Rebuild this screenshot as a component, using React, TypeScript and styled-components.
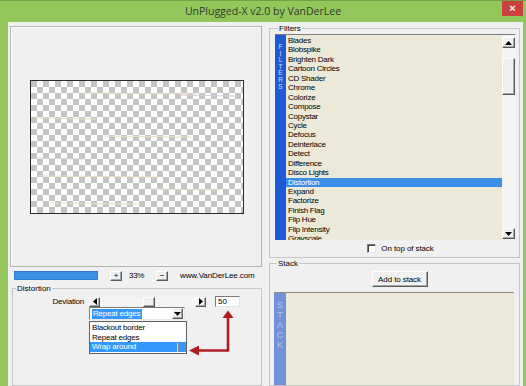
import React from "react";
import styled, { createGlobalStyle, css } from "styled-components";

const GlobalStyle = createGlobalStyle`
  html, body { margin: 0; padding: 0; background: #fff; }
  body {
    font-family: "Liberation Sans", Arial, sans-serif;
    font-size: 8px;
    color: #000;
  }
  * { box-sizing: border-box; }
`;

const raised = css`
  background: #f0f0f0;
  border: 1px solid;
  border-color: #fff #5a5a5a #5a5a5a #fff;
  box-shadow: inset -1px -1px 0 #a8a8a8;
`;

const sunken = css`
  background: #fff;
  border: 1px solid;
  border-color: #7a7a7a #e6e6e6 #e6e6e6 #7a7a7a;
`;

const filters = [
    "Blades", "Blobspike", "Brighten Dark", "Cartoon Circles", "CD Shader", "Chrome",
    "Colorize", "Compose", "Copystar", "Cycle", "Defocus", "Deinterlace", "Detect",
    "Difference", "Disco Lights", "Distortion", "Expand", "Factorize", "Finish Flag",
    "Flip Hue", "Flip Intensity", "Grayscale",
];

const streaks = [
    { x: 55, y: 12, w: 110, c: "#e6dcc0" },
    { x: 150, y: 14, w: 55, c: "#d9cde3" },
    { x: 5, y: 37, w: 60, c: "#e8dfc4" },
    { x: 70, y: 55, w: 90, c: "#ebe2c8" },
    { x: 3, y: 77, w: 50, c: "#ddd2e4" },
    { x: 8, y: 95, w: 120, c: "#e8dec2" },
    { x: 120, y: 108, w: 70, c: "#e4dbc6" },
    { x: 20, y: 122, w: 90, c: "#e9e0c8" },
];

const Frame = styled.div`
  position: relative;
  width: 526px;
  height: 386px;
  overflow: hidden;
  background: #93c75c;
  border-top: 1px solid #739f45;
  display: flex;
  flex-direction: column;
`;

const TitleBar = styled.div`
  height: 21px;
  display: grid;
  grid-template-columns: 1fr auto 1fr;
  align-items: center;
`;

const TitleText = styled.div`
  grid-column: 2;
  font-family: "Open Sans", "Noto Sans", sans-serif;
  font-size: 10.5px;
  color: #2f3a28;
  padding-bottom: 2px;
`;

const CloseButton = styled.div`
  grid-column: 3;
  justify-self: end;
  align-self: start;
  width: 21px;
  height: 16px;
  margin-right: 3px;
  margin-top: -1px;
  background: #c9403e;
  color: #fff;
  font-size: 11px;
  font-weight: bold;
  display: flex;
  align-items: center;
  justify-content: center;
`;

const Client = styled.div`
  flex: 1;
  margin: 0 3px 0 8px;
  background: #f0f0f0;
  display: flex;
  min-height: 0;
`;

const LeftPane = styled.div`
  width: 258px;
  padding: 4px 0 0 2px;
  display: flex;
  flex-direction: column;
`;

const Preview = styled.div`
  width: 252px;
  height: 241px;
  flex-shrink: 0;
  border: 1px solid #b4b4b4;
  box-shadow: inset 1px 1px 0 #fff;
  display: flex;
  align-items: center;
  justify-content: center;
  padding-left: 1px;
`;

const Checker = styled.div`
  position: relative;
  width: 214px;
  height: 134px;
  border: 1px solid #2b2b2b;
  background: repeating-conic-gradient(#c4c4c4 0 25%, #ffffff 0 50%) 0 0 / 12px 12px;
  background-position: 6px 0;
`;

const Streaks = styled.svg`
  position: absolute;
  inset: 0;
`;

const ZoomRow = styled.div`
  height: 13px;
  margin-top: 2px;
  padding-left: 4px;
  display: flex;
  align-items: center;
  flex-shrink: 0;
`;

const ZoomBar = styled.div`
  width: 84px;
  height: 9px;
  background: #3a8fe6;
  border: 1px solid #2f7cd0;
`;

const TinyButton = styled.div<{ $ml: number }>`
  ${raised};
  width: 12px;
  height: 10px;
  margin-left: ${({ $ml }) => $ml}px;
  display: flex;
  align-items: center;
  justify-content: center;
  font-size: 8px;
  line-height: 1;
`;

const ZoomValue = styled.span`
  margin-left: 7px;
  width: 22px;
  letter-spacing: -0.3px;
`;

const SiteLink = styled.span`
  margin-left: 12px;
  letter-spacing: -0.1px;
`;

const Group = styled.fieldset<{ $ml?: number }>`
  margin: 0 0 0 ${({ $ml }) => $ml ?? 0}px;
  padding: 0;
  border: 1px solid #c6c6c6;
  min-width: 0;
  position: relative;
`;

const Legend = styled.legend`
  font-size: 8px;
  line-height: 9px;
  padding: 0 1px;
  margin-left: 3px;
`;

const DistortionGroup = styled(Group)`
  width: 250px;
  flex: 1;
  margin-top: 2px;
  padding-top: 3px;
`;

const ControlRow = styled.div`
  display: flex;
  align-items: center;
  height: 11px;
`;

const RowLabel = styled.span`
  width: 71px;
  text-align: right;
  letter-spacing: -0.2px;
`;

const HScroll = styled.div`
  width: 117px;
  height: 10px;
  margin-left: 5px;
  display: flex;
  background: #f4f4f4;
`;

const ScrollButton = styled.div<{ $w?: number; $h?: number }>`
  ${raised};
  width: ${({ $w }) => $w ?? 11}px;
  height: ${({ $h }) => $h ?? 10}px;
  flex-shrink: 0;
  display: flex;
  align-items: center;
  justify-content: center;
`;

const Track = styled.div`
  flex: 1;
  display: flex;
  padding-left: 43px;
`;

const ValueBox = styled.div`
  ${sunken};
  width: 25px;
  height: 11px;
  margin-left: 9px;
  padding-left: 2px;
  line-height: 9px;
`;

const SelectWrap = styled.div`
  position: relative;
  margin-left: 76px;
  width: 96px;
`;

const SelectBox = styled.div`
  ${sunken};
  height: 13px;
  display: flex;
  align-items: center;
  padding: 0 1px 0 2px;
`;

const SelectedText = styled.span`
  background: #3399ff;
  color: #ffffff;
  line-height: 10px;
  padding: 0 2px 0 1px;
  letter-spacing: -0.2px;
  white-space: nowrap;
`;

const SelectArrow = styled(ScrollButton)`
  margin-left: auto;
`;

const DropList = styled.div`
  position: absolute;
  top: 14px;
  left: 0;
  width: 98px;
  background: #fff;
  border: 1px solid #5f5f5f;
  padding: 1px 0;
`;

const DropItem = styled.div<{ $active?: boolean }>`
  position: relative;
  height: 9.5px;
  line-height: 9.5px;
  padding-left: 2px;
  letter-spacing: -0.2px;
  background: ${({ $active }) => ($active ? "#3399ff" : "transparent")};
  color: ${({ $active }) => ($active ? "#fff" : "#000")};
`;

const Cursor = styled.div`
  position: absolute;
  right: 7px;
  top: 1px;
  width: 2px;
  height: 9px;
  background: #8a8a8a;
  border-left: 1px solid #d8d8d8;
`;

const RightPane = styled.div`
  flex: 1;
  padding: 2px 3px 0 3px;
  display: flex;
  flex-direction: column;
`;

const FiltersGroup = styled(Group)`
  height: 234px;
  flex-shrink: 0;
  padding: 1px 4px 0 5px;
  display: flex;
  flex-direction: column;
`;

const ListBox = styled.div<{ $h?: number }>`
  display: flex;
  height: ${({ $h }) => ($h ? `${$h}px` : "auto")};
  border-top: 1px solid #7c7c7c;
  background: #ece9d8;
  overflow: hidden;
`;

const Strip = styled.div<{ $bg: string; $fg: string; $pt: number; $lh: number; $fs: number; $w: number }>`
  width: ${({ $w }) => $w}px;
  flex-shrink: 0;
  background: ${({ $bg }) => $bg};
  color: ${({ $fg }) => $fg};
  padding-top: ${({ $pt }) => $pt}px;
  font-size: ${({ $fs }) => $fs}px;
  line-height: ${({ $lh }) => $lh}px;
  display: flex;
  flex-direction: column;
  align-items: center;
`;

const Items = styled.div`
  flex: 1;
  padding-top: 1px;
`;

const Item = styled.div<{ $active?: boolean }>`
  height: 9.45px;
  line-height: 9.45px;
  padding-left: 2px;
  letter-spacing: -0.25px;
  white-space: nowrap;
  background: ${({ $active }) => ($active ? "#3b8ee8" : "transparent")};
  color: ${({ $active }) => ($active ? "#fff" : "#000")};
`;

const VScroll = styled.div`
  width: 13px;
  flex-shrink: 0;
  background: #f4f4f4;
  display: flex;
  flex-direction: column;
  padding: 2px 0 1px;
`;

const Thumb = styled.div`
  ${raised};
  height: 37px;
  margin-top: 10px;
`;

const Spacer = styled.div`
  flex: 1;
`;

const CheckRow = styled.label`
  height: 11px;
  margin-top: 3px;
  padding-left: 11px;
  display: flex;
  align-items: center;
  justify-content: center;
  letter-spacing: -0.1px;
`;

const CheckBox = styled.span`
  ${sunken};
  width: 9px;
  height: 9px;
  margin-right: 5px;
  box-shadow: inset 1px 1px 0 #404040;
`;

const StackGroup = styled(Group)`
  flex: 1;
  margin-top: 1px;
  padding: 3px 5px 0 4px;
  display: flex;
  flex-direction: column;
`;

const ButtonRow = styled.div`
  display: flex;
  justify-content: center;
  padding-left: 11px;
`;

const PushButton = styled.button`
  ${raised};
  width: 56px;
  height: 16px;
  padding: 0;
  font-family: inherit;
  font-size: 8px;
  letter-spacing: -0.1px;
  color: #000;
`;

const StackList = styled(ListBox)`
  flex: 1;
  margin-top: 5px;
  border-top-color: #8a8a8a;
`;

const Annotation = styled.svg`
  position: absolute;
  left: 0;
  top: 0;
  pointer-events: none;
`;

function Tri({ dir }: { dir: "up" | "down" | "left" | "right" }) {
    const pts = {
        up: "0,4 3.5,0 7,4",
        down: "0,0 7,0 3.5,4",
        left: "4,0 4,7 0,3.5",
        right: "0,0 0,7 4,3.5",
    }[dir];
    const vertical = dir === "up" || dir === "down";
    return (
        <svg width={vertical ? 7 : 4} height={vertical ? 4 : 7} viewBox={vertical ? "0 0 7 4" : "0 0 4 7"}>
            <polygon points={pts} fill="#000" />
        </svg>
    );
}

function App() {
    return (
        <>
            <GlobalStyle />
            <Frame>
                <TitleBar>
                    <TitleText>UnPlugged-X v2.0 by VanDerLee</TitleText>
                    <CloseButton>×</CloseButton>
                </TitleBar>
                <Client>
                    <LeftPane>
                        <Preview>
                            <Checker>
                                <Streaks width="212" height="132">
                                    {streaks.map((s, i) => (
                                        <line key={i} x1={s.x} y1={s.y} x2={s.x + s.w} y2={s.y + 1} stroke={s.c} strokeWidth="1" />
                                    ))}
                                </Streaks>
                            </Checker>
                        </Preview>
                        <ZoomRow>
                            <ZoomBar />
                            <TinyButton $ml={12}>+</TinyButton>
                            <ZoomValue>33%</ZoomValue>
                            <TinyButton $ml={5}>−</TinyButton>
                            <SiteLink>www.VanDerLee.com</SiteLink>
                        </ZoomRow>
                        <DistortionGroup $ml={2}>
                            <Legend>Distortion</Legend>
                            <ControlRow>
                                <RowLabel>Deviation</RowLabel>
                                <HScroll>
                                    <ScrollButton><Tri dir="left" /></ScrollButton>
                                    <Track>
                                        <ScrollButton $w={12} />
                                    </Track>
                                    <ScrollButton><Tri dir="right" /></ScrollButton>
                                </HScroll>
                                <ValueBox>50</ValueBox>
                            </ControlRow>
                            <SelectWrap>
                                <SelectBox>
                                    <SelectedText>Repeat edges</SelectedText>
                                    <SelectArrow $w={11} $h={11}><Tri dir="down" /></SelectArrow>
                                </SelectBox>
                                <DropList>
                                    <DropItem>Blackout border</DropItem>
                                    <DropItem>Repeat edges</DropItem>
                                    <DropItem $active>Wrap around<Cursor /></DropItem>
                                </DropList>
                            </SelectWrap>
                        </DistortionGroup>
                    </LeftPane>
                    <RightPane>
                        <FiltersGroup>
                            <Legend>Filters</Legend>
                            <ListBox $h={206}>
                                <Strip $bg="#1d5bd6" $fg="#cfe0ff" $pt={9} $lh={6.6} $fs={6.4} $w={11}>
                                    {"FILTERS".split("").map((c, i) => <span key={i}>{c}</span>)}
                                </Strip>
                                <Items>
                                    {filters.map((f) => (
                                        <Item key={f} $active={f === "Distortion"}>{f}</Item>
                                    ))}
                                </Items>
                                <VScroll>
                                    <ScrollButton $w={13} $h={11}><Tri dir="up" /></ScrollButton>
                                    <Thumb />
                                    <Spacer />
                                    <ScrollButton $w={13} $h={11}><Tri dir="down" /></ScrollButton>
                                </VScroll>
                            </ListBox>
                            <CheckRow>
                                <CheckBox />
                                On top of stack
                            </CheckRow>
                        </FiltersGroup>
                        <StackGroup>
                            <Legend>Stack</Legend>
                            <ButtonRow>
                                <PushButton>Add to stack</PushButton>
                            </ButtonRow>
                            <StackList>
                                <Strip $bg="#7191d8" $fg="#b4c8f2" $pt={7} $lh={10} $fs={9} $w={12}>
                                    {"STACK".split("").map((c, i) => <span key={i}>{c}</span>)}
                                </Strip>
                            </StackList>
                        </StackGroup>
                    </RightPane>
                </Client>
                <Annotation width="526" height="386">
                    <g stroke="#b01b22" strokeWidth="2.6" fill="none" strokeLinejoin="round">
                        <polyline points="228,315 228,349.5 198,349.5" />
                    </g>
                    <polygon points="228,309.5 222.5,317 233.5,317" fill="#b01b22" />
                    <polygon points="189,349.5 199,344.5 199,354.5" fill="#b01b22" />
                </Annotation>
            </Frame>
        </>
    );
}

export default App;
